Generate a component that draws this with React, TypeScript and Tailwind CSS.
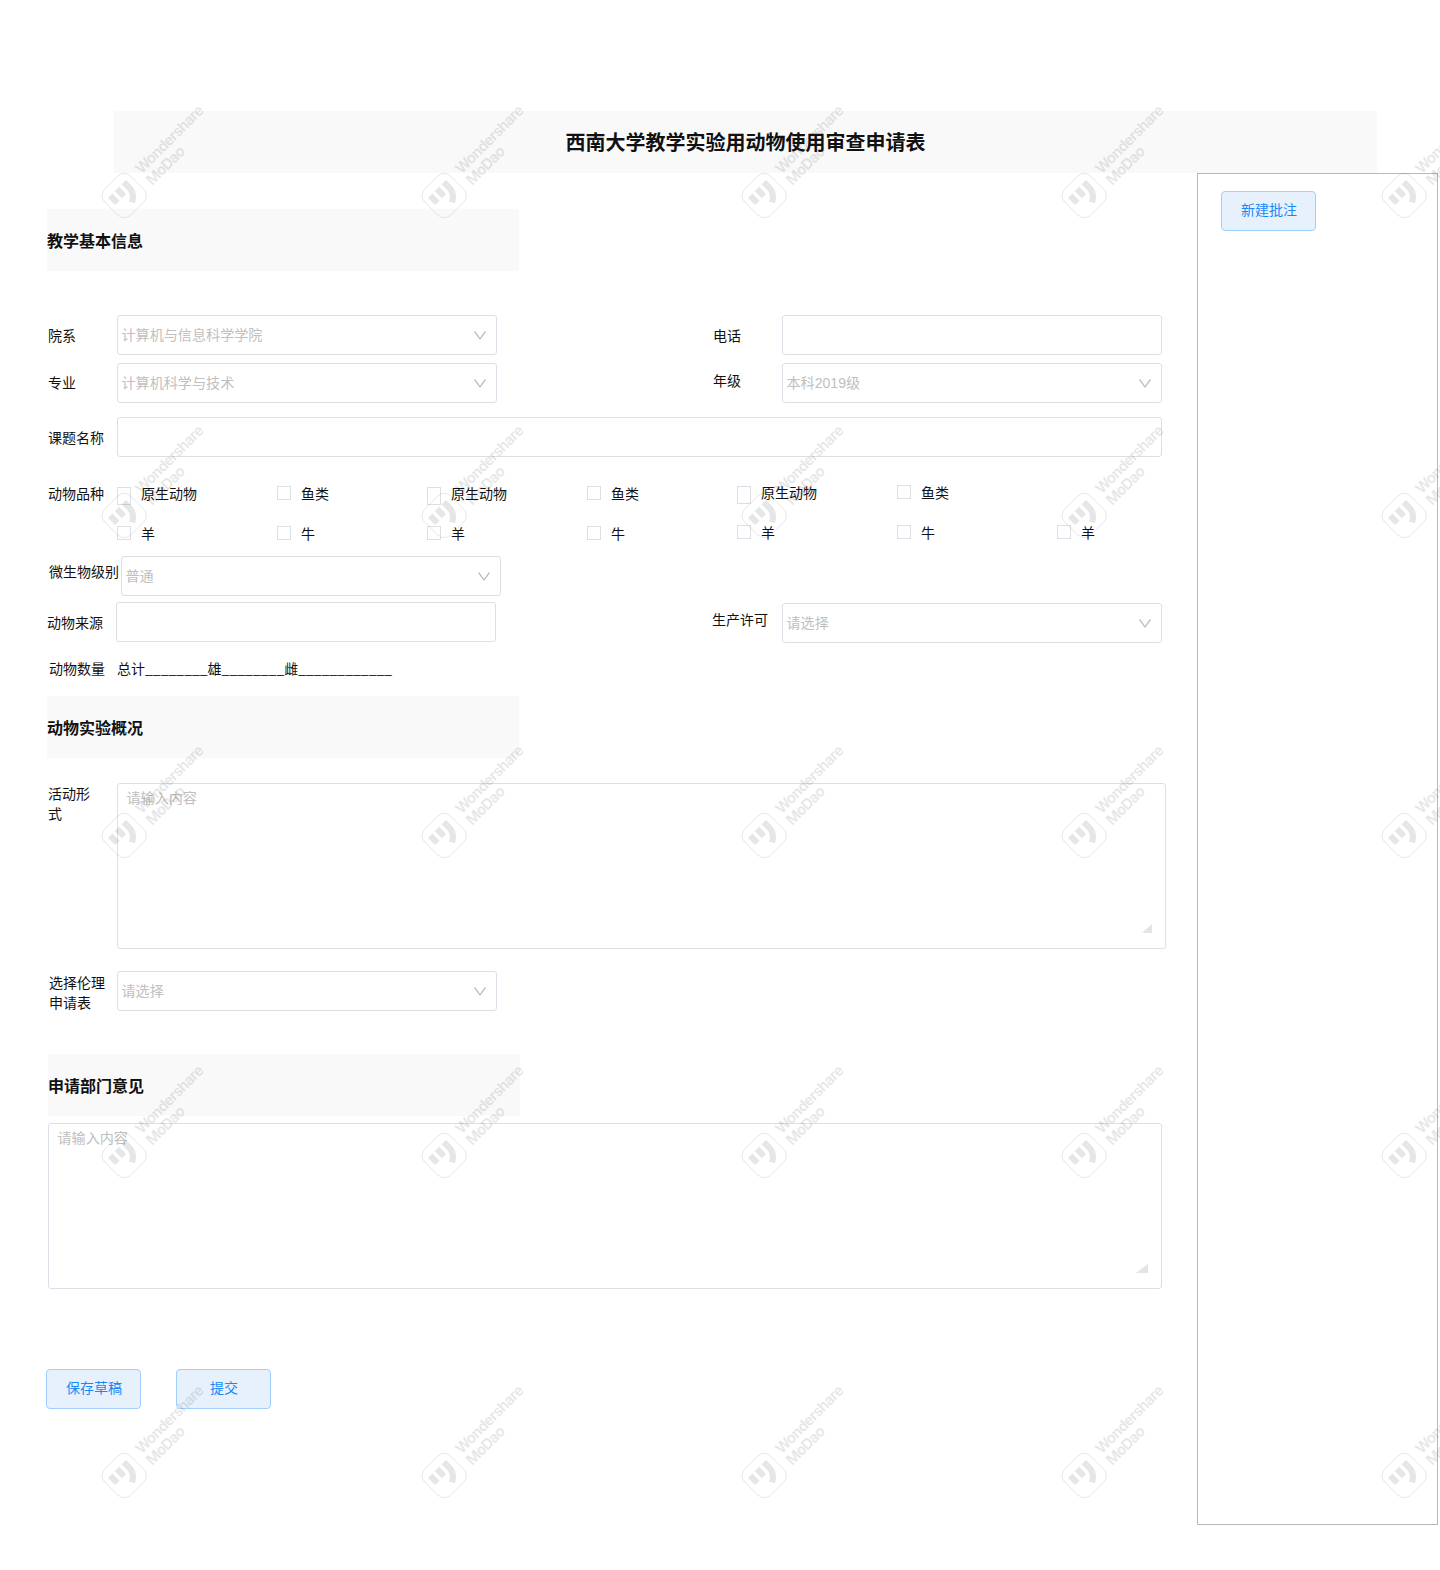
import type { ReactNode } from 'react';

const TILES = Array.from({ length: 25 }, (_, i) => i);

function Watermark() {
  return (
    <div className="pointer-events-none absolute inset-0 z-10 grid h-[1570px] w-[1440px] grid-cols-[repeat(5,320px)] grid-rows-[repeat(5,320px)] overflow-hidden">
      {TILES.map((i) => (
        <svg key={i} width="320" height="320" viewBox="0 0 320 320" className="block overflow-visible opacity-[0.095]">
          <g transform="translate(124.2 195.5) rotate(-45)">
            <rect x="-18.3" y="-18.3" width="36.6" height="36.6" rx="9" fill="none" stroke="#000" strokeWidth="0.9" />
            <path d="M-13.1 -9.7h6.1v10h-6.1zM-3.6 -9.7h6.1v10h-6.1zM6 -9.7h6.2v6.6c0 7.8-3.6 13-10.2 16.2l-2.7-5.4c4.7-2.3 6.7-5.7 6.7-10.8z" fill="#000" />
          </g>
          <g fill="#000" fontFamily="Inter, sans-serif" fontSize="14.8" fontWeight="600">
            <text transform="translate(141.4 174.6) rotate(-45)" textLength="89.5">Wondershare</text>
            <text transform="translate(152.2 186) rotate(-45)" textLength="48">MoDao</text>
          </g>
        </svg>
      ))}
    </div>
  );
}

function Label({ children, className = '' }: { children: ReactNode; className?: string }) {
  return <div className={`shrink-0 text-sm whitespace-nowrap text-[#111] ${className}`}>{children}</div>;
}

const BOX = 'shrink-0 rounded-[3px] border border-[#dcdfe6]';

function Select({ value, className = '' }: { value: string; className?: string }) {
  return (
    <div className={`${BOX} flex h-10 w-[380px] items-center justify-between pr-2.5 pl-[3.5px] font-['Liberation_Sans','Noto_Sans_CJK_SC',sans-serif] text-[14.1px] text-[#c0c0c0] ${className}`}>
      <span className="leading-5">{value}</span>
      <svg width="12" height="9" viewBox="0 0 12 9" fill="none" stroke="#c0c0c4" strokeWidth="1.4">
        <path d="M0.5 0.5L6 7.8L11.5 0.5" />
      </svg>
    </div>
  );
}

function Check({ label, className = '', box = 'h-3.5', text = '-mt-px' }: { label: string; className?: string; box?: string; text?: string }) {
  return (
    <div className={`flex shrink-0 items-start ${className}`}>
      <span className={`w-3.5 shrink-0 border border-[#dcdfe6] ${box}`} />
      <Label className={`ml-2.5 leading-[18px] ${text}`}>{label}</Label>
    </div>
  );
}

function Heading({ children, className = '' }: { children: ReactNode; className?: string }) {
  return (
    <h2 className={`flex h-[62px] w-[472px] items-center bg-[#f9f9f9] text-base font-bold text-[#111] ${className}`}>{children}</h2>
  );
}

function Button({ children, className = '' }: { children: ReactNode; className?: string }) {
  return (
    <button className={`h-10 w-[95px] shrink-0 rounded-[4px] border border-[#a0cfff] bg-[#e6f1fc] pb-1 pl-px text-sm text-[#1989fa] ${className}`}>
      {children}
    </button>
  );
}

function TextArea({ className = '', grip = '' }: { className?: string; grip?: string }) {
  return (
    <div className={`${BOX} relative h-[166px] px-[8.5px] pt-[3px] text-[14.1px] leading-5 text-[#c0c0c0] ${className}`}>
      请输入内容
      <svg className={`absolute bottom-[15px] ${grip}`} height="9" viewBox="0 0 10 9" preserveAspectRatio="none" fill="#e4e4e4">
        <path d="M10 0V9H0z" />
      </svg>
    </div>
  );
}

export default function App() {
  return (
    <div className="relative h-[1570px] w-[1440px] overflow-hidden bg-white font-['Noto_Sans_CJK_SC',sans-serif]">
      <header className="pt-[111px] pl-[114px]">
        <h1 className="flex h-[62px] w-[1263px] items-center justify-center bg-[#f9f9f9] text-xl font-bold text-[#111]">
          西南大学教学实验用动物使用审查申请表
        </h1>
      </header>

      <div className="flex items-start">
        <main className="w-[1197px] shrink-0 pt-9">
          <Heading className="ml-[47px]">教学基本信息</Heading>

          <div className="mt-11 flex h-12 items-start">
            <Label className="mt-[11px] ml-12 w-[69px] leading-[18px]">院系</Label>
            <Select value="计算机与信息科学学院" />
            <Label className="mt-[11px] ml-[216px] w-[69px] leading-[18px]">电话</Label>
            <div className={`${BOX} h-10 w-[380px]`} />
          </div>
          <div className="flex h-[54px] items-start">
            <Label className="mt-[10px] ml-12 w-[69px] leading-[18px]">专业</Label>
            <Select value="计算机科学与技术" />
            <Label className="mt-2 ml-[216px] w-[69px] leading-[18px]">年级</Label>
            <Select value="本科2019级" />
          </div>
          <div className="flex h-[68px] items-start">
            <Label className="mt-[11px] ml-12 w-[69px] leading-[18px]">课题名称</Label>
            <div className={`${BOX} h-10 w-[1045px]`} />
          </div>

          <div className="flex h-10 items-start">
            <Label className="-mt-px ml-12 w-[69px] leading-[18px]">动物品种</Label>
            <Check label="原生动物" className="w-40" box="mt-0.5 h-[18px]" />
            <Check label="鱼类" className="w-[150px]" box="mt-px h-3.5" />
            <Check label="原生动物" className="w-40" box="mt-0.5 h-[18px]" />
            <Check label="鱼类" className="w-[150px]" box="mt-px h-3.5" />
            <Check label="原生动物" className="w-40" box="mt-px h-[18px]" text="-mt-0.5" />
            <Check label="鱼类" box="h-3.5" text="-mt-0.5" />
          </div>
          <div className="flex h-[31px] items-start pl-[117px]">
            <Check label="羊" className="w-40" box="mt-px h-3.5" />
            <Check label="牛" className="w-[150px]" box="mt-px h-3.5" />
            <Check label="羊" className="w-40" box="mt-px h-3.5" />
            <Check label="牛" className="w-[150px]" box="mt-px h-3.5" />
            <Check label="羊" className="w-40" box="h-3.5" text="-mt-0.5" />
            <Check label="牛" className="w-40" box="h-3.5" text="-mt-0.5" />
            <Check label="羊" box="h-3.5" text="-mt-0.5" />
          </div>

          <div className="flex h-[46px] items-start">
            <Label className="mt-[6px] ml-[49px] w-[72px] leading-[18px]">微生物级别</Label>
            <Select value="普通" />
          </div>
          <div className="flex h-[58px] items-start">
            <Label className="mt-[11px] ml-[47px] w-[69px] leading-[18px]">动物来源</Label>
            <div className={`${BOX} h-10 w-[380px]`} />
            <Label className="mt-2 ml-[216px] w-[70px] leading-[18px]">生产许可</Label>
            <Select value="请选择" className="mt-px" />
          </div>
          <div className="flex h-9 items-start">
            <Label className="-mt-px ml-[49px] w-[68px] leading-[18px]">动物数量</Label>
            <Label className="-mt-px leading-[18px]">总计________雄________雌____________</Label>
          </div>

          <Heading className="ml-[47px]">动物实验概况</Heading>
          <div className="mt-[25px] flex items-start">
            <Label className="ml-12 w-[69px] leading-5">活动形<br />式</Label>
            <TextArea className="w-[1049px]" grip="right-[13px] w-2.5" />
          </div>
          <div className="mt-[22px] flex h-[83px] items-start">
            <Label className="mt-px ml-[49px] w-[68px] leading-5">选择伦理<br />申请表</Label>
            <Select value="请选择" />
          </div>

          <Heading className="ml-12">申请部门意见</Heading>
          <TextArea className="mt-[7px] ml-12 w-[1114px]" grip="right-[13px] w-3" />

          <div className="mt-20 ml-[46px] flex gap-[35px]">
            <Button>保存草稿</Button>
            <Button>提交</Button>
          </div>
        </main>

        <aside className="h-[1352px] w-[241px] shrink-0 border border-[#b8b8b8] pt-[17px] pl-[23px]">
          <Button>新建批注</Button>
        </aside>
      </div>

      <Watermark />
    </div>
  );
}
